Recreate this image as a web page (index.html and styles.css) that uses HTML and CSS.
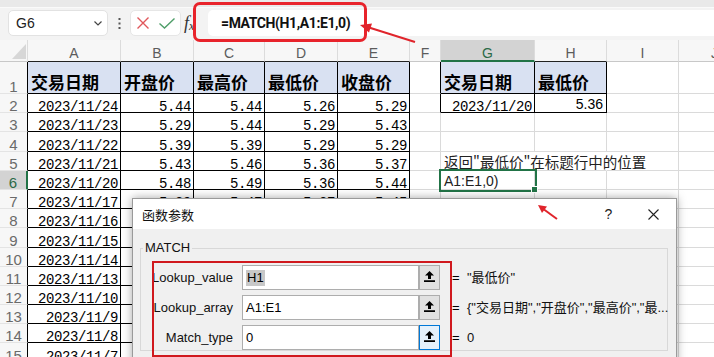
FILE: index.html
```html
<!DOCTYPE html>
<html lang="zh-CN">
<head>
<meta charset="utf-8">
<title>MATCH</title>
<link rel="stylesheet" href="styles.css">
</head>
<body>
<div class="toolbar">
  <div class="topstrip"></div>
  <div class="fbar">
    <div class="namebox"><span>G6</span><svg width="8" height="5" viewBox="0 0 8 5"><polyline points="0.5,0.5 4,4 7.5,0.5" fill="none" stroke="#444" stroke-width="1.2"/></svg></div>
    <div class="dots"><svg width="3" height="11" viewBox="0 0 3 11"><rect x="0.5" y="0" width="2" height="2" fill="#555"/><rect x="0.5" y="4.5" width="2" height="2" fill="#555"/><rect x="0.5" y="9" width="2" height="2" fill="#555"/></svg></div>
    <div class="fxbox">
      <svg width="12" height="12" viewBox="0 0 12 12"><path d="M0.5 0.5 L11.5 11.5 M11.5 0.5 L0.5 11.5" stroke="#e0575b" stroke-width="1.4" fill="none"/></svg>
      <svg width="16" height="11" viewBox="0 0 16 11"><polyline points="0.5,5.5 5.5,10 15.5,0.5" stroke="#4f9e69" stroke-width="1.4" fill="none"/></svg>
    </div>
    <div class="fx"><span class="fx-f">f</span><span class="fx-x">x</span></div>
    <div class="formula">=MATCH(H1,A1:E1,0)</div>
  </div>
</div>

<div class="sheet">
  <div class="corner"><svg width="14" height="15" viewBox="0 0 14 15"><polygon points="14,0 14,15 0,15" fill="#d7d7d7"/></svg></div>
  <div class="ch tb">A</div><div class="ch tb">B</div><div class="ch tb">C</div><div class="ch tb">D</div><div class="ch tb">E</div><div class="ch">F</div><div class="ch csel">G</div><div class="ch tb">H</div><div class="ch">I</div><div class="ch">J</div>

  <div class="rh">1</div>
  <div class="c t hd">交易日期</div><div class="c t hd">开盘价</div><div class="c t hd">最高价</div><div class="c t hd">最低价</div><div class="c t hd">收盘价</div>
  <div class="c lt"></div><div class="c t hd">交易日期</div><div class="c t hd">最低价</div><div class="c"></div><div class="c"></div>

  <div class="rh">2</div>
  <div class="c t m">2023/11/24</div><div class="c t m">5.44</div><div class="c t m">5.44</div><div class="c t m">5.26</div><div class="c t m">5.29</div>
  <div class="c lt"></div><div class="c t m">2023/11/20</div><div class="c t p">5.36</div><div class="c"></div><div class="c"></div>

  <div class="rh">3</div>
  <div class="c t m">2023/11/23</div><div class="c t m">5.29</div><div class="c t m">5.44</div><div class="c t m">5.29</div><div class="c t m">5.43</div>
  <div class="c"></div><div class="c"></div><div class="c"></div><div class="c"></div><div class="c"></div>

  <div class="rh">4</div>
  <div class="c t m">2023/11/22</div><div class="c t m">5.39</div><div class="c t m">5.39</div><div class="c t m">5.29</div><div class="c t m">5.29</div>
  <div class="c"></div><div class="c"></div><div class="c"></div><div class="c"></div><div class="c"></div>

  <div class="rh">5</div>
  <div class="c t m">2023/11/21</div><div class="c t m">5.43</div><div class="c t m">5.46</div><div class="c t m">5.36</div><div class="c t m">5.37</div>
  <div class="c"></div><div class="c nr note">返回"最低价"在标题行中的位置</div><div class="c nr"></div><div class="c"></div><div class="c"></div>

  <div class="rh rsel">6</div>
  <div class="c t m">2023/11/20</div><div class="c t m">5.48</div><div class="c t m">5.49</div><div class="c t m">5.36</div><div class="c t m">5.44</div>
  <div class="c"></div><div class="c sel edit">A1:E1,0)<span class="handle"></span></div><div class="c"></div><div class="c"></div><div class="c"></div>

  <div class="rh">7</div>
  <div class="c t m">2023/11/17</div><div class="c t m">5.39</div><div class="c t m">5.47</div><div class="c t m">5.37</div><div class="c t m">5.45</div>
  <div class="c"></div><div class="c"></div><div class="c"></div><div class="c"></div><div class="c"></div>

  <div class="rh">8</div>
  <div class="c t m">2023/11/16</div><div class="c t"></div><div class="c t"></div><div class="c t"></div><div class="c t"></div>
  <div class="c"></div><div class="c"></div><div class="c"></div><div class="c"></div><div class="c"></div>

  <div class="rh">9</div>
  <div class="c t m">2023/11/15</div><div class="c t"></div><div class="c t"></div><div class="c t"></div><div class="c t"></div>
  <div class="c"></div><div class="c"></div><div class="c"></div><div class="c"></div><div class="c"></div>

  <div class="rh">10</div>
  <div class="c t m">2023/11/14</div><div class="c t"></div><div class="c t"></div><div class="c t"></div><div class="c t"></div>
  <div class="c"></div><div class="c"></div><div class="c"></div><div class="c"></div><div class="c"></div>

  <div class="rh">11</div>
  <div class="c t m">2023/11/13</div><div class="c t"></div><div class="c t"></div><div class="c t"></div><div class="c t"></div>
  <div class="c"></div><div class="c"></div><div class="c"></div><div class="c"></div><div class="c"></div>

  <div class="rh">12</div>
  <div class="c t m">2023/11/10</div><div class="c t"></div><div class="c t"></div><div class="c t"></div><div class="c t"></div>
  <div class="c"></div><div class="c"></div><div class="c"></div><div class="c"></div><div class="c"></div>

  <div class="rh">13</div>
  <div class="c t m">2023/11/9</div><div class="c t"></div><div class="c t"></div><div class="c t"></div><div class="c t"></div>
  <div class="c"></div><div class="c"></div><div class="c"></div><div class="c"></div><div class="c"></div>

  <div class="rh">14</div>
  <div class="c t m">2023/11/8</div><div class="c t"></div><div class="c t"></div><div class="c t"></div><div class="c t"></div>
  <div class="c"></div><div class="c"></div><div class="c"></div><div class="c"></div><div class="c"></div>

  <div class="rh">15</div>
  <div class="c t m">2023/11/7</div><div class="c t"></div><div class="c t"></div><div class="c t"></div><div class="c t"></div>
  <div class="c"></div><div class="c"></div><div class="c"></div><div class="c"></div><div class="c"></div>
</div>

<div class="dialog">
  <div class="dlg-title">
    <span class="dlg-name">函数参数</span>
    <div class="dlg-btns">
      <span class="dbtn">?</span>
      <span class="dbtn"><svg width="11" height="11" viewBox="0 0 11 11"><path d="M0.5 0.5 L10.5 10.5 M10.5 0.5 L0.5 10.5" stroke="#222" stroke-width="1.1" fill="none"/></svg></span>
    </div>
  </div>
  <fieldset class="grp">
    <legend>MATCH</legend>
    <div class="params">
      <span class="lbl">Lookup_value</span>
      <div class="inp"><span class="hl">H1</span></div>
      <div class="pick"><svg width="11" height="11" viewBox="0 0 11 11"><path d="M5.5 0 L10 4.6 L7 4.6 L7 8 L4 8 L4 4.6 L1 4.6 Z M0 9.3 H11 V11 H0 Z" fill="#000"/></svg></div>
      <div class="eq">=</div>
      <div class="val">"最低价"</div>

      <span class="lbl">Lookup_array</span>
      <div class="inp">A1:E1</div>
      <div class="pick"><svg width="11" height="11" viewBox="0 0 11 11"><path d="M5.5 0 L10 4.6 L7 4.6 L7 8 L4 8 L4 4.6 L1 4.6 Z M0 9.3 H11 V11 H0 Z" fill="#000"/></svg></div>
      <div class="eq">=</div>
      <div class="val">{"交易日期","开盘价","最高价","最...</div>

      <span class="lbl">Match_type</span>
      <div class="inp">0</div>
      <div class="pick active"><svg width="11" height="11" viewBox="0 0 11 11"><path d="M5.5 0 L10 4.6 L7 4.6 L7 8 L4 8 L4 4.6 L1 4.6 Z M0 9.3 H11 V11 H0 Z" fill="#000"/></svg></div>
      <div class="eq">=</div>
      <div class="val">0</div>
    </div>
  </fieldset>
  <div class="redbox"></div>
</div>

<div class="ann-formula"></div>
<svg class="arrows" width="714" height="357" viewBox="0 0 714 357">
  <line x1="415" y1="42" x2="369" y2="27.5" stroke="#e0242b" stroke-width="2"/>
  <polygon points="360,25 372,23.5 369,32.5" fill="#e0242b"/>
  <line x1="557" y1="219" x2="544" y2="209.5" stroke="#e0242b" stroke-width="2"/>
  <polygon points="538,205 547,206.5 542,213" fill="#e0242b"/>
</svg>
</body>
</html>
```
FILE: styles.css
```css
html, body {
  margin: 0;
  padding: 0;
  width: 714px;
  height: 357px;
  overflow: hidden;
  background: #fff;
}
body {
  position: relative;
  font-family: "Liberation Sans", "Noto Sans CJK SC", sans-serif;
  color: #000;
}

/* ---------- formula toolbar ---------- */
.toolbar {
  height: 40px;
  background: #f3f3f3;
}
.topstrip {
  height: 7px;
  background: #e9e9e9;
  border-bottom: 1px solid #fafafa;
}
.fbar {
  display: flex;
  height: 26px;
  margin-top: 2px;
  padding-left: 8px;
}
.namebox {
  box-sizing: border-box;
  width: 100px;
  background: #fff;
  border: 1px solid #e2e2e2;
  border-radius: 5px;
  display: flex;
  align-items: center;
  justify-content: space-between;
  padding: 0 5px 0 7px;
  font-size: 14px;
  color: #222;
}
.dots {
  width: 22px;
  display: flex;
  align-items: center;
  justify-content: center;
}
.fxbox {
  box-sizing: border-box;
  width: 51px;
  background: #fff;
  border: 1px solid #e6e6e6;
  border-radius: 5px;
  display: flex;
  align-items: center;
  gap: 10px;
  padding-left: 6px;
}
.fx {
  width: 27px;
  box-sizing: border-box;
  padding-left: 3px;
  display: flex;
  align-items: center;
  color: #333;
}
.fx-f {
  font: italic 18px "Liberation Serif", serif;
}
.fx-x {
  font: italic 12px "Liberation Serif", serif;
  margin-top: 6px;
}
.formula {
  flex: 1;
  background: #fff;
  border-radius: 5px 0 0 5px;
  display: flex;
  align-items: center;
  padding-left: 13px;
  font: 700 14px Roboto, "Liberation Sans", sans-serif;
  letter-spacing: -0.4px;
  color: #111;
}

/* ---------- sheet grid ---------- */
.sheet {
  display: grid;
  grid-template-columns: 28px 93px 73px 71px 73px 72px 31px 94px 72px 72px 72px;
  grid-template-rows: 22px 32px repeat(14, 19.2px);
  width: 751px;
}
.sheet > div {
  box-sizing: border-box;
  min-width: 0;
  white-space: nowrap;
}
.corner {
  background: #f7f7f7;
  border-right: 1px solid #dcdcdc;
  border-bottom: 1px solid #c8c8c8;
  display: flex;
  align-items: flex-end;
  justify-content: flex-end;
  padding: 0 1px 2px 0;
}
.ch {
  background: #f7f7f7;
  border-right: 1px solid #dcdcdc;
  border-bottom: 1px solid #c8c8c8;
  display: flex;
  align-items: flex-end;
  justify-content: center;
  font-size: 14px;
  line-height: 12px;
  padding-bottom: 2px;
  color: #5c5c5c;
}
.ch.tb {
  border-bottom-color: #222;
}
.ch.csel {
  background: #d3d3d3;
  border-bottom: 2px solid #217346;
  color: #2b6a47;
  padding-bottom: 1px;
}
.rh {
  background: #f7f7f7;
  border-right: 1px solid #000;
  border-bottom: 1px solid #e4e4e4;
  display: flex;
  align-items: flex-end;
  justify-content: center;
  font-size: 15px;
  line-height: 11px;
  padding-bottom: 1px;
  color: #6a6a6a;
}
.rh.rsel {
  background: #d3d3d3;
  border-right: 2px solid #217346;
  color: #2b6a47;
}
.c {
  border-right: 1px solid #dadada;
  border-bottom: 1px solid #dadada;
  display: flex;
  align-items: flex-end;
}
.c.t {
  border-right-color: #000;
  border-bottom-color: #000;
}
.c.lt {
  border-right-color: #000;
}
.c.nr {
  border-right-color: transparent;
}
.hd {
  background: #d9e1f2;
  font: 700 17px "Noto Sans CJK SC", sans-serif;
  line-height: 14px;
  padding: 0 0 4px 3px;
}
.m {
  justify-content: flex-end;
  font: 14px "Liberation Mono", monospace;
  letter-spacing: -0.4px;
  line-height: 10px;
  padding-right: 2px;
}
.p {
  justify-content: flex-end;
  font-size: 14px;
  line-height: 11px;
  padding: 0 3px 2px 0;
}
.note {
  font: 14.5px "Noto Sans CJK SC", sans-serif;
  line-height: 13px;
  padding: 0 0 2px 3px;
  color: #222;
}
.edit {
  font-size: 14px;
  line-height: 11px;
  padding: 0 0 2px 3px;
  color: #222;
}
.sel {
  position: relative;
  outline: 2px solid #217346;
  z-index: 1;
}
.handle {
  position: absolute;
  right: -4px;
  bottom: -4px;
  width: 5px;
  height: 5px;
  background: #217346;
  border: 1px solid #fff;
}

/* ---------- dialog ---------- */
.dialog {
  position: absolute;
  left: 132px;
  top: 198px;
  width: 545px;
  height: 180px;
  box-sizing: border-box;
  background: #f0f0f0;
  border: 1px solid #9a9a9a;
  box-shadow: 0 0 9px rgba(0, 0, 0, 0.35);
  z-index: 5;
  font-size: 13px;
}
.dlg-title {
  height: 30px;
  background: #fff;
  display: flex;
  align-items: center;
  padding-left: 9px;
}
.dlg-name {
  font: 13px "Noto Sans CJK SC", sans-serif;
  color: #111;
}
.dlg-btns {
  margin-left: auto;
  display: flex;
  height: 100%;
}
.dbtn {
  width: 45px;
  display: flex;
  align-items: center;
  justify-content: center;
  font: 14px "Liberation Sans", sans-serif;
  color: #222;
}
.grp {
  margin: 11px 8px 0 7px;
  padding: 9px 0 0 0;
  border: 1px solid #d8d8d8;
  min-width: 0;
}
.grp legend {
  margin-left: 2px;
  padding: 0 2px;
  font-size: 13px;
  line-height: 16px;
  color: #111;
}
.params {
  display: grid;
  grid-template-columns: 92px 186px 21px 25px 1fr;
  grid-auto-rows: 25px;
  row-gap: 5px;
  align-items: center;
}
.lbl {
  justify-self: end;
  font-size: 13px;
  line-height: 16px;
  color: #111;
}
.inp {
  margin-left: 9px;
  height: 25px;
  box-sizing: border-box;
  background: #fff;
  border: 1px solid #adadad;
  display: flex;
  align-items: center;
  padding-left: 3px;
  font-size: 13px;
  line-height: 16px;
}
.hl {
  background: #c8c8c8;
  padding: 0 1px;
}
.pick {
  height: 25px;
  box-sizing: border-box;
  background: #e1e1e1;
  border: 1px solid #adadad;
  display: flex;
  align-items: center;
  justify-content: center;
  padding-bottom: 3px;
}
.pick.active {
  background: #e5f1fb;
  border-color: #0078d7;
}
.eq {
  padding-left: 12px;
  font-size: 13px;
  line-height: 16px;
}
.val {
  padding-left: 2px;
  white-space: nowrap;
  font: 13px "Liberation Sans", "Noto Sans CJK SC", sans-serif;
  line-height: 16px;
  color: #111;
}
.redbox {
  position: absolute;
  left: 19px;
  top: 62px;
  width: 300px;
  height: 96px;
  box-sizing: border-box;
  border: 2px solid #d0191e;
}

/* ---------- annotations ---------- */
.ann-formula {
  position: absolute;
  left: 193px;
  top: 2px;
  width: 174px;
  height: 40px;
  box-sizing: border-box;
  border: 3px solid #e8232b;
  border-radius: 7px;
  z-index: 10;
}
.arrows {
  position: absolute;
  left: 0;
  top: 0;
  z-index: 10;
  pointer-events: none;
}
```
